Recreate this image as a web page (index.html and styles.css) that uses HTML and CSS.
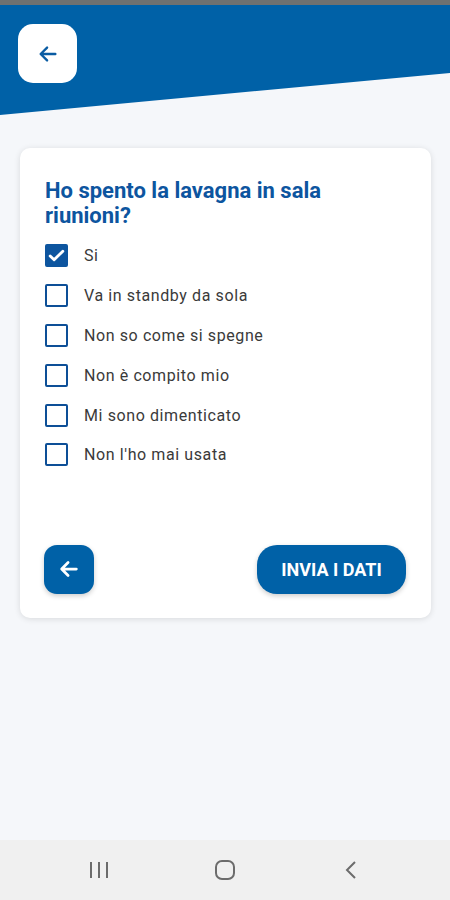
FILE: index.html
```html
<!DOCTYPE html>
<html lang="it">
<head>
<meta charset="UTF-8" />
<meta name="viewport" content="width=device-width, initial-scale=1.0">
<title>Questionario</title>
<link rel="stylesheet" href="styles.css">
</head>
<body>

<div class="status"></div>

<header class="top">
  <button class="back-top" aria-label="Indietro">
    <svg width="22" height="22" viewBox="0 0 24 24"><path d="M20 12H5M11 5l-7 7 7 7" fill="none" stroke="#0a5ca3" stroke-width="2.6" stroke-linecap="round" stroke-linejoin="round"/></svg>
  </button>
</header>

<main class="page">
  <section class="card">
    <h2>Ho spento la lavagna in sala riunioni?</h2>
    <ul class="options">
      <li><span class="box checked"><svg width="19" height="19" viewBox="0 0 24 24"><path d="M4 12.5l5 5L20 6.5" fill="none" stroke="#fff" stroke-width="3.6" stroke-linecap="round" stroke-linejoin="round"/></svg></span>Si</li>
      <li><span class="box"></span>Va in standby da sola</li>
      <li><span class="box"></span>Non so come si spegne</li>
      <li><span class="box"></span>Non è compito mio</li>
      <li><span class="box"></span>Mi sono dimenticato</li>
      <li><span class="box"></span>Non l'ho mai usata</li>
    </ul>
    <div class="actions">
      <button class="btn-back" aria-label="Indietro">
        <svg width="22" height="22" viewBox="0 0 24 24"><path d="M20 12H5M11 5l-7 7 7 7" fill="none" stroke="#fff" stroke-width="3" stroke-linecap="round" stroke-linejoin="round"/></svg>
      </button>
      <button class="btn-send">INVIA I DATI</button>
    </div>
  </section>
</main>

<nav class="sysnav">
  <span><svg width="22" height="20" viewBox="0 0 22 20"><path d="M3 2v16M11 2v16M19 2v16" stroke="#6c6c6c" stroke-width="2"/></svg></span>
  <span><svg width="22" height="22" viewBox="0 0 22 22"><rect x="2" y="2" width="18" height="18" rx="6" fill="none" stroke="#6c6c6c" stroke-width="2"/></svg></span>
  <span><svg width="14" height="20" viewBox="0 0 14 20"><path d="M11 2L3 10l8 8" fill="none" stroke="#6c6c6c" stroke-width="2"/></svg></span>
</nav>

</body>
</html>
```

FILE: styles.css
```css
body {
  font-family: Roboto, 'Noto Sans', sans-serif;
  margin: 0;
  background: #f5f7fa;
  height: 900px;
  display: flex;
  flex-direction: column;
  overflow: hidden;
}
.status {
  height: 5px;
  background: #6f7170;
}
.top {
  height: 110px;
  background: #0061a7;
  clip-path: polygon(0 0, 100% 0, 100% 68px, 0 100%);
  padding: 19px 0 0 18px;
  box-sizing: border-box;
}
.back-top {
  width: 59px;
  height: 59px;
  border: none;
  border-radius: 15px;
  background: #fff;
  display: flex;
  align-items: center;
  justify-content: center;
  padding: 0;
}
.page {
  flex: 1;
  padding: 33px 19px 0 20px;
}
.card {
  background: #fff;
  border-radius: 10px;
  box-shadow: 0 1px 6px rgba(0,0,0,0.12);
  padding: 30px 25px 24px 25px;
}
.card h2 {
  margin: 0 0 8px;
  max-width: 320px;
  color: #0d559f;
  font-size: 22px;
  line-height: 25px;
  font-weight: 700;
}
.options {
  list-style: none;
  margin: 0;
  padding: 0;
}
.options li {
  display: flex;
  align-items: center;
  height: 39.8px;
  font-size: 16px;
  letter-spacing: 0.6px;
  color: #3a3a3a;
}
.box {
  width: 23px;
  height: 23px;
  box-sizing: border-box;
  border: 2px solid #0d4f97;
  border-radius: 2px;
  margin-right: 16px;
  display: flex;
  align-items: center;
  justify-content: center;
}
.box.checked {
  background: #0d559f;
  border-color: #0d559f;
}
.actions {
  display: flex;
  justify-content: space-between;
  align-items: center;
  margin-top: 70px;
}
.btn-back {
  width: 50px;
  height: 49px;
  border: none;
  border-radius: 13px;
  background: #0061a7;
  display: flex;
  align-items: center;
  justify-content: center;
  padding: 0;
  box-shadow: 0 2px 5px rgba(0,0,0,0.2);
  margin-left: -1px;
}
.btn-send {
  width: 149px;
  height: 49px;
  border: none;
  border-radius: 20px;
  background: #0061a7;
  color: #fff;
  font-family: Roboto, sans-serif;
  font-weight: 700;
  font-size: 18px;
  box-shadow: 0 2px 5px rgba(0,0,0,0.2);
}
.sysnav {
  height: 60px;
  background: #f0f0f0;
  display: flex;
  align-items: center;
  justify-content: center;
  gap: 66px;
}
.sysnav span {
  width: 60px;
  display: flex;
  justify-content: center;
}
```
